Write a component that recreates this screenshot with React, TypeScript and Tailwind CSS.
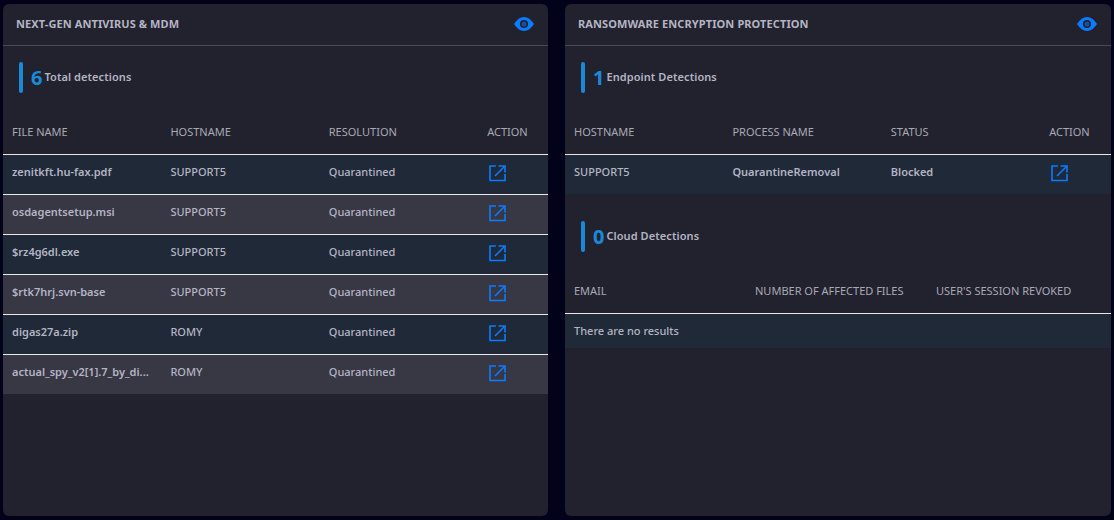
import React from "react";

const avRows = [
  ["zenitkft.hu-fax.pdf", "SUPPORT5"],
  ["osdagentsetup.msi", "SUPPORT5"],
  ["$rz4g6dl.exe", "SUPPORT5"],
  ["$rtk7hrj.svn-base", "SUPPORT5"],
  ["digas27a.zip", "ROMY"],
  ["actual_spy_v2[1].7_by_di...", "ROMY"],
];

function EyeIcon() {
  return (
    <svg viewBox="0 0 20 14" className="mb-[1px] h-[14px] w-5 text-[#0a7cff]">
      <path d="M0 7C3 2.4 6.2 0 10 0s7 2.4 10 7c-3 4.6-6.200 7-10 7S3 11.600 0 7z" fill="currentColor" />
      <circle cx="10" cy="7" r="3.300" fill="#1a4f96" stroke="#22222e" strokeWidth="1.500" />
    </svg>
  );
}

function PanelHeader({ title }: { title: string }) {
  return (
    <div className="flex h-[42px] items-center justify-between border-b border-[#4b4a55] pr-[14px] pl-[13px]">
      <span className="text-[11px] font-bold tracking-[0.1px] text-[#b4b4c4] uppercase">{title}</span>
      <EyeIcon />
    </div>
  );
}

function Stat({ count, label }: { count: number; label: string }) {
  return (
    <div className="flex h-[31px] items-center pl-4">
      <div className="h-[31px] w-1 rounded-sm bg-[#1a8ad8]" />
      <span className="ml-2 text-[20px] leading-none font-bold text-[#1a8ad8]">{count}</span>
      <span className="ml-[2px] text-[11px] font-semibold tracking-[0.08px] text-[#b4b4c4]">{label}</span>
    </div>
  );
}

function OpenIcon() {
  return (
    <svg viewBox="0 0 17 17" fill="none" stroke="currentColor" strokeWidth="1.600" className="mt-[2px] ml-[2px] h-[17px] w-[17px] text-[#0a7cff]">
      <path d="M7 1H1v14.500h15V9" />
      <path d="M9.500 1H16v6.500" />
      <path d="M15.500 1.500 6 11" />
    </svg>
  );
}

export default function App() {
  return (
    <div className="flex h-[520px] w-[1114px] gap-[17px] bg-[#02021a] pt-1 pr-[3px] pb-1 pl-[3px] font-['Noto_Sans','Open_Sans',sans-serif] text-[11px] font-medium text-[#b4b4c4]">
      <section className="h-[512px] w-[545px] overflow-hidden rounded-md bg-[#22222e]">
        <PanelHeader title="Next-Gen Antivirus & MDM" />
        <div className="pt-4">
          <Stat count={6} label="Total detections" />
        </div>
        <div className="mt-[24px] grid h-[37px] grid-cols-[158.4px_158.4px_158.4px_1fr] items-center pb-[7px] pl-[9px] font-normal text-[#a9a9b4]">
          <span>FILE NAME</span>
          <span>HOSTNAME</span>
          <span>RESOLUTION</span>
          <span>ACTION</span>
        </div>
        {avRows.map(([file, host], i) => (
          <div
            key={file}
            className={`grid h-[40px] grid-cols-[158.4px_158.4px_158.4px_1fr] items-center border-t border-[#e8e8ea] pb-[4px] pl-[9px] ${
              i % 2 === 0 ? "bg-[#1f2937]" : "bg-[#383744]"
            }`}
          >
            <span className="font-semibold">{file}</span>
            <span>{host}</span>
            <span>Quarantined</span>
            <OpenIcon />
          </div>
        ))}
      </section>

      <section className="h-[512px] w-[546px] overflow-hidden rounded-md bg-[#22222e]">
        <PanelHeader title="Ransomware Encryption Protection" />
        <div className="pt-4">
          <Stat count={1} label="Endpoint Detections" />
        </div>
        <div className="mt-[24px] grid h-[37px] grid-cols-[158.4px_158.4px_158.4px_1fr] items-center pb-[7px] pl-[9px] font-normal text-[#a9a9b4]">
          <span>HOSTNAME</span>
          <span>PROCESS NAME</span>
          <span>STATUS</span>
          <span>ACTION</span>
        </div>
        <div className="grid h-[40px] grid-cols-[158.4px_158.4px_158.4px_1fr] items-center border-t border-[#e8e8ea] bg-[#1f2937] pb-[4px] pl-[9px]">
          <span>SUPPORT5</span>
          <span className="font-semibold">QuarantineRemoval</span>
          <span className="font-semibold">Blocked</span>
          <OpenIcon />
        </div>
        <div className="mt-[27px]">
          <Stat count={0} label="Cloud Detections" />
        </div>
        <div className="mt-[24px] grid h-[37px] grid-cols-[181px_181px_1fr] items-center pb-[7px] pl-[9px] font-normal text-[#a9a9b4]">
          <span>EMAIL</span>
          <span>NUMBER OF AFFECTED FILES</span>
          <span>USER'S SESSION REVOKED</span>
        </div>
        <div className="flex h-[35px] items-center border-t border-[#e8e8ea] bg-[#1f2937] pl-[9px]">
          There are no results
        </div>
      </section>
    </div>
  );
}
